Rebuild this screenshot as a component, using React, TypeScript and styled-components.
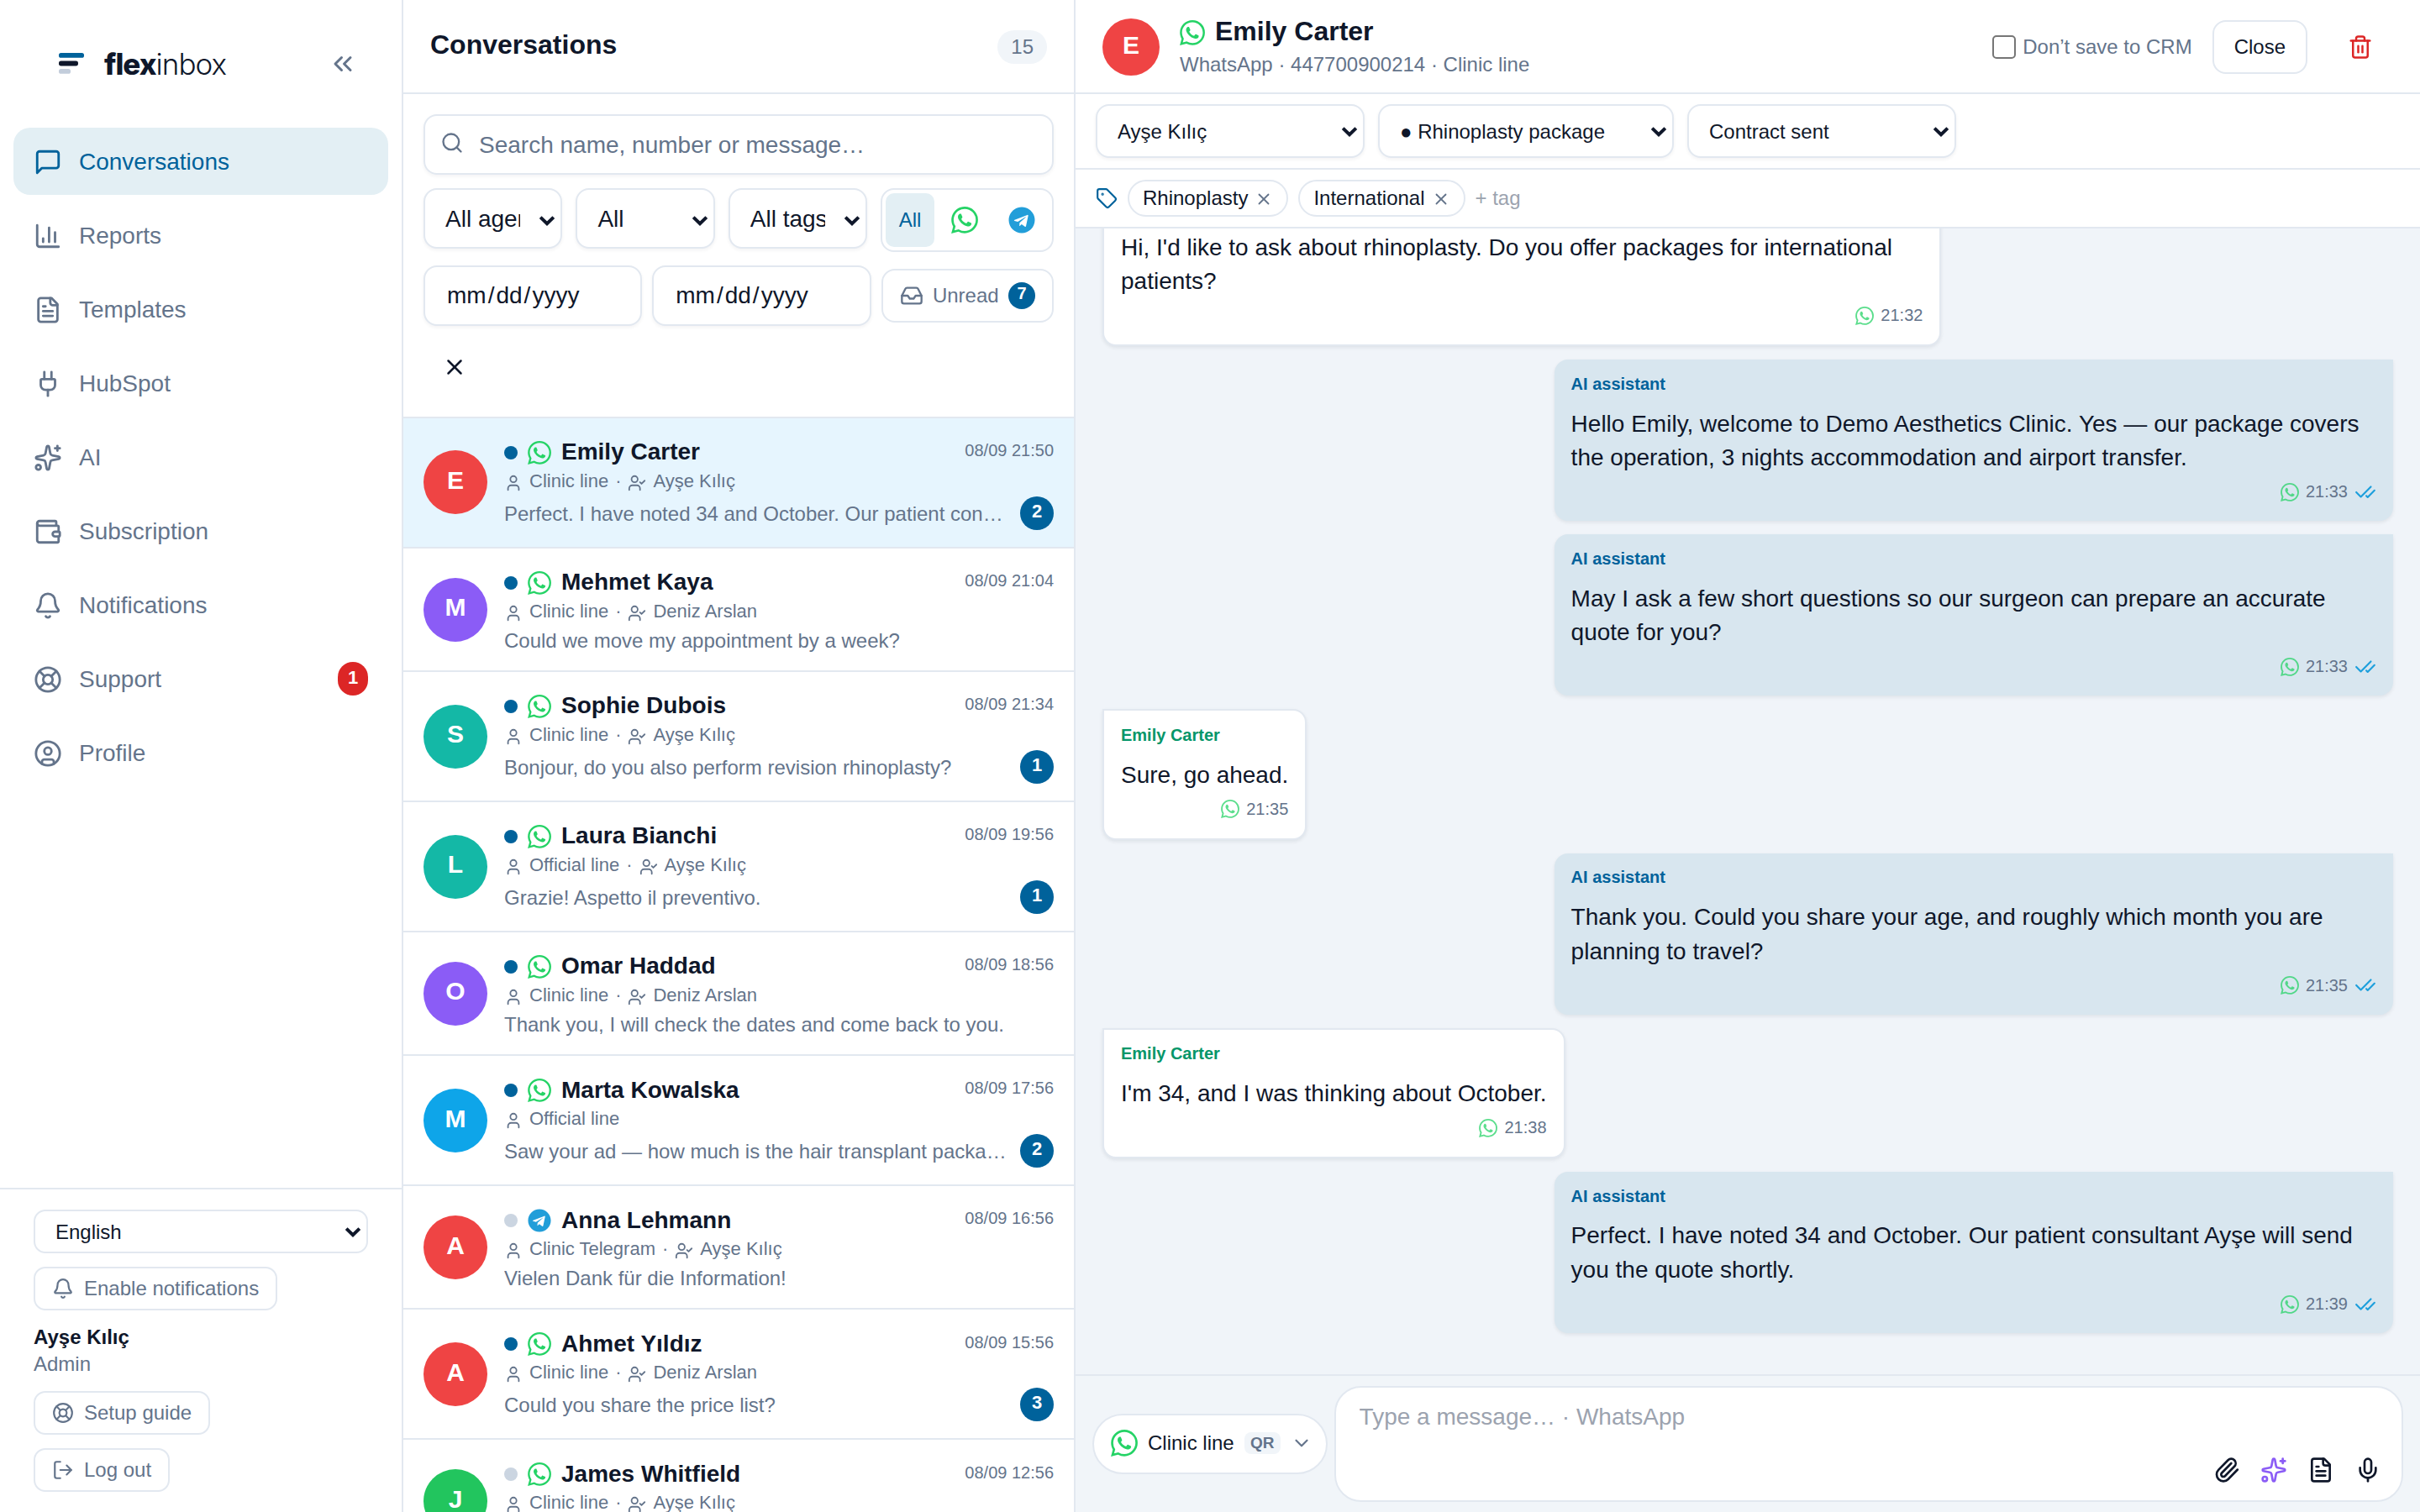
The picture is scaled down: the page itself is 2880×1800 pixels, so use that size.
import React, { FC } from "react";
import styled, { createGlobalStyle } from "styled-components";
import {
  Bell,
  ChartColumn,
  CheckCheck,
  ChevronDown,
  ChevronsLeft,
  CircleUser,
  Inbox,
  LifeBuoy,
  LogOut,
  Mic,
  Paperclip,
  Plug,
  Search,
  Sparkles,
  Tag,
  Trash2,
  User,
  UserCheck,
  Wallet,
  X,
} from "lucide-react";
import { FaTelegram } from "react-icons/fa";
import { SiWhatsapp } from "react-icons/si";

const colors = {
  primary: "#00629b",
  primarySoft: "#e3eff4",
  text: "#0f172a",
  muted: "#64748b",
  border: "#e2e8f0",
  surface: "#f1f5f9",
  danger: "#dc2626",
  whatsapp: "#25d366",
  telegram: "#229ed9",
};

type Channel = "whatsapp" | "telegram";

type Conversation = {
  name: string;
  color: string;
  channel: Channel;
  open: boolean;
  line: string;
  agent?: string;
  preview: string;
  time: string;
  unread?: number;
};

type Message = {
  out: boolean;
  sender: string;
  text: string;
  time: string;
};

const conversations: Conversation[] = [
  { name: "Emily Carter", color: "#ef4444", channel: "whatsapp", open: true, line: "Clinic line", agent: "Ayşe Kılıç", preview: "Perfect. I have noted 34 and October. Our patient consultant Ayşe will send you the quote shortly.", time: "08/09 21:50", unread: 2 },
  { name: "Mehmet Kaya", color: "#8b5cf6", channel: "whatsapp", open: true, line: "Clinic line", agent: "Deniz Arslan", preview: "Could we move my appointment by a week?", time: "08/09 21:04" },
  { name: "Sophie Dubois", color: "#14b8a6", channel: "whatsapp", open: true, line: "Clinic line", agent: "Ayşe Kılıç", preview: "Bonjour, do you also perform revision rhinoplasty?", time: "08/09 21:34", unread: 1 },
  { name: "Laura Bianchi", color: "#14b8a6", channel: "whatsapp", open: true, line: "Official line", agent: "Ayşe Kılıç", preview: "Grazie! Aspetto il preventivo.", time: "08/09 19:56", unread: 1 },
  { name: "Omar Haddad", color: "#8b5cf6", channel: "whatsapp", open: true, line: "Clinic line", agent: "Deniz Arslan", preview: "Thank you, I will check the dates and come back to you.", time: "08/09 18:56" },
  { name: "Marta Kowalska", color: "#0ea5e9", channel: "whatsapp", open: true, line: "Official line", preview: "Saw your ad — how much is the hair transplant package?", time: "08/09 17:56", unread: 2 },
  { name: "Anna Lehmann", color: "#ef4444", channel: "telegram", open: false, line: "Clinic Telegram", agent: "Ayşe Kılıç", preview: "Vielen Dank für die Information!", time: "08/09 16:56" },
  { name: "Ahmet Yıldız", color: "#ef4444", channel: "whatsapp", open: true, line: "Clinic line", agent: "Deniz Arslan", preview: "Could you share the price list?", time: "08/09 15:56", unread: 3 },
  { name: "James Whitfield", color: "#22c55e", channel: "whatsapp", open: false, line: "Clinic line", agent: "Ayşe Kılıç", preview: "", time: "08/09 12:56" },
];

const messages: Message[] = [
  { out: false, sender: "Emily Carter", text: "Hi, I'd like to ask about rhinoplasty. Do you offer packages for international patients?", time: "21:32" },
  { out: true, sender: "AI assistant", text: "Hello Emily, welcome to Demo Aesthetics Clinic. Yes — our package covers the operation, 3 nights accommodation and airport transfer.", time: "21:33" },
  { out: true, sender: "AI assistant", text: "May I ask a few short questions so our surgeon can prepare an accurate quote for you?", time: "21:33" },
  { out: false, sender: "Emily Carter", text: "Sure, go ahead.", time: "21:35" },
  { out: true, sender: "AI assistant", text: "Thank you. Could you share your age, and roughly which month you are planning to travel?", time: "21:35" },
  { out: false, sender: "Emily Carter", text: "I'm 34, and I was thinking about October.", time: "21:38" },
  { out: true, sender: "AI assistant", text: "Perfect. I have noted 34 and October. Our patient consultant Ayşe will send you the quote shortly.", time: "21:39" },
];

const LineIcon: FC<{ size: number; children: React.ReactNode }> = ({ size, children }) => (
  <svg
    width={size}
    height={size}
    viewBox="0 0 24 24"
    fill="none"
    stroke="currentColor"
    strokeWidth="2"
    strokeLinecap="round"
    strokeLinejoin="round"
  >
    {children}
  </svg>
);

const ChatIcon: FC<{ size: number }> = ({ size }) => (
  <LineIcon size={size}>
    <path d="M21 15a2 2 0 0 1-2 2H7l-4 4V5a2 2 0 0 1 2-2h14a2 2 0 0 1 2 2z" />
  </LineIcon>
);

const DocIcon: FC<{ size: number }> = ({ size }) => (
  <LineIcon size={size}>
    <path d="M15 2H6a2 2 0 0 0-2 2v16a2 2 0 0 0 2 2h12a2 2 0 0 0 2-2V7Z" />
    <path d="M14 2v4a2 2 0 0 0 2 2h4" />
    <path d="M10 9H8" />
    <path d="M16 13H8" />
    <path d="M16 17H8" />
  </LineIcon>
);

const ChannelIcon: FC<{ channel: Channel; size: number }> = ({ channel, size }) =>
  channel === "whatsapp" ? (
    <SiWhatsapp size={size} color={colors.whatsapp} />
  ) : (
    <FaTelegram size={size} color={colors.telegram} />
  );

type SelectProps = {
  options: string[];
  width?: string;
  height: number;
  fontSize: number;
};

const Select: FC<SelectProps> = ({ options, width, height, fontSize }) => (
  <SelectBox $width={width} $height={height} $fontSize={fontSize}>
    <select>
      {options.map((option) => (
        <option key={option}>{option}</option>
      ))}
    </select>
    <svg width="10" height="7" viewBox="0 0 10 7" fill="none" stroke="currentColor" strokeWidth="2">
      <path d="M1.1 1.3 5 5.1 8.9 1.3" />
    </svg>
  </SelectBox>
);

const navItems = [
  { label: "Conversations", icon: <ChatIcon size={17} />, active: true },
  { label: "Reports", icon: <ChartColumn size={17} /> },
  { label: "Templates", icon: <DocIcon size={17} /> },
  { label: "HubSpot", icon: <Plug size={17} /> },
  { label: "AI", icon: <Sparkles size={17} /> },
  { label: "Subscription", icon: <Wallet size={17} /> },
  { label: "Notifications", icon: <Bell size={17} /> },
  { label: "Support", icon: <LifeBuoy size={17} />, badge: 1 },
  { label: "Profile", icon: <CircleUser size={17} /> },
];

const Sidebar: FC = () => (
  <SidebarWrapper>
    <Brand>
      <svg width="15" height="13" viewBox="0 0 15 13">
        <rect width="15" height="2.9" rx="1.3" fill={colors.primary} />
        <rect y="4.8" width="11.5" height="2.9" rx="1.3" fill={colors.text} />
        <rect y="9.5" width="7" height="2.9" rx="1.3" fill="#c3cddb" />
      </svg>
      <BrandName>
        <b>flex</b>inbox
      </BrandName>
      <ChevronsLeft size={18} />
    </Brand>
    <Nav>
      {navItems.map((item) => (
        <NavItem key={item.label} $active={item.active}>
          {item.icon}
          <span>{item.label}</span>
          {item.badge && <NavBadge>{item.badge}</NavBadge>}
        </NavItem>
      ))}
    </Nav>
    <SidebarFooter>
      <Select options={["English", "Türkçe"]} width="100%" height={26} fontSize={12} />
      <SmallButton>
        <Bell size={13} />
        Enable notifications
      </SmallButton>
      <Account>
        <b>Ayşe Kılıç</b>
        <span>Admin</span>
      </Account>
      <SmallButton>
        <LifeBuoy size={13} />
        Setup guide
      </SmallButton>
      <SmallButton>
        <LogOut size={13} />
        Log out
      </SmallButton>
    </SidebarFooter>
  </SidebarWrapper>
);

const Filters: FC = () => (
  <FiltersWrapper>
    <SearchBox>
      <Search size={14} />
      <input placeholder="Search name, number or message…" />
    </SearchBox>
    <FilterRow $gap={8}>
      <Select options={["All agents"]} height={36} fontSize={14} />
      <Select options={["All"]} height={36} fontSize={14} />
      <Select options={["All tags"]} height={36} fontSize={14} />
      <ChannelGroup>
        <ChannelButton $active>All</ChannelButton>
        <ChannelButton>
          <ChannelIcon channel="whatsapp" size={16} />
        </ChannelButton>
        <ChannelButton>
          <ChannelIcon channel="telegram" size={16} />
        </ChannelButton>
      </ChannelGroup>
    </FilterRow>
    <FilterRow $gap={6}>
      <DateInput type="date" />
      <DateInput type="date" />
      <UnreadButton>
        <Inbox size={14} />
        Unread
        <UnreadCount>7</UnreadCount>
      </UnreadButton>
    </FilterRow>
    <ClearButton>
      <X size={15} />
    </ClearButton>
  </FiltersWrapper>
);

const ConversationRow: FC<{ item: Conversation; active: boolean }> = ({ item, active }) => (
  <Row $active={active}>
    <Avatar $size={38} $color={item.color}>
      {item.name[0]}
    </Avatar>
    <RowBody>
      <RowTop>
        <Dot $open={item.open} />
        <ChannelIcon channel={item.channel} size={14} />
        <RowName>{item.name}</RowName>
        <RowTime>{item.time}</RowTime>
      </RowTop>
      <RowMeta>
        <User size={11} />
        {item.line}
        {item.agent && (
          <>
            <span>·</span>
            <UserCheck size={11} />
            {item.agent}
          </>
        )}
      </RowMeta>
      <RowBottom>
        <Preview>{item.preview}</Preview>
        {item.unread && <Count>{item.unread}</Count>}
      </RowBottom>
    </RowBody>
  </Row>
);

const ConversationList: FC = () => (
  <ListWrapper>
    <ListHeader>
      <h1>Conversations</h1>
      <TotalPill>15</TotalPill>
    </ListHeader>
    <Filters />
    <Rows>
      {conversations.map((item, i) => (
        <ConversationRow key={item.name} item={item} active={i === 0} />
      ))}
    </Rows>
  </ListWrapper>
);

const ChatHeader: FC = () => (
  <Header>
    <Avatar $size={34} $color="#ef4444">
      E
    </Avatar>
    <HeaderInfo>
      <HeaderName>
        <ChannelIcon channel="whatsapp" size={15} />
        <b>Emily Carter</b>
      </HeaderName>
      <HeaderSub>WhatsApp · 447700900214 · Clinic line</HeaderSub>
    </HeaderInfo>
    <CrmLabel>
      <input type="checkbox" />
      Don’t save to CRM
    </CrmLabel>
    <CloseButton>Close</CloseButton>
    <DeleteButton>
      <Trash2 size={15} />
    </DeleteButton>
  </Header>
);

const Chat: FC = () => (
  <ChatWrapper>
    <ChatHeader />
    <AssignBar>
      <Select options={["Ayşe Kılıç"]} width="160px" height={32} fontSize={12} />
      <Select options={["● Rhinoplasty package"]} width="176px" height={32} fontSize={12} />
      <Select options={["Contract sent"]} width="160px" height={32} fontSize={12} />
    </AssignBar>
    <TagBar>
      <Tag size={13} />
      {["Rhinoplasty", "International"].map((tag) => (
        <TagChip key={tag}>
          {tag}
          <X size={11} />
        </TagChip>
      ))}
      <TagInput placeholder="+ tag" />
    </TagBar>
    <Messages>
      {messages.map((message, i) => (
        <Bubble key={i} $out={message.out}>
          <Sender $out={message.out}>{message.sender}</Sender>
          <p>{message.text}</p>
          <BubbleFooter>
            <SiWhatsapp size={11} color={colors.whatsapp} opacity={0.75} />
            {message.time}
            {message.out && <CheckCheck size={13} color="#1d9fdc" />}
          </BubbleFooter>
        </Bubble>
      ))}
    </Messages>
    <Composer>
      <LinePicker>
        <ChannelIcon channel="whatsapp" size={16} />
        Clinic line
        <QrBadge>QR</QrBadge>
        <ChevronDown size={13} color={colors.muted} />
      </LinePicker>
      <ComposerBox>
        <textarea placeholder="Type a message… · WhatsApp" />
        <ComposerTools>
          <ToolButton>
            <Paperclip size={16} />
          </ToolButton>
          <ToolButton $color="#8b5cf6">
            <Sparkles size={16} />
          </ToolButton>
          <ToolButton>
            <DocIcon size={16} />
          </ToolButton>
          <ToolButton>
            <Mic size={16} />
          </ToolButton>
        </ComposerTools>
      </ComposerBox>
    </Composer>
  </ChatWrapper>
);

const App: FC = () => (
  <>
    <GlobalStyle />
    <Shell>
      <Sidebar />
      <ConversationList />
      <Chat />
    </Shell>
  </>
);

// The layout is authored at 1440x900 and scaled for a retina sized window
const GlobalStyle = createGlobalStyle`
  * {
    box-sizing: border-box;
  }

  body {
    margin: 0;
    overflow: hidden;
  }

  #root {
    zoom: 2;
    font-family: "Liberation Sans", Arial, sans-serif;
    font-size: 14px;
    line-height: 1.45;
    color: ${colors.text};
  }

  button,
  input,
  select,
  textarea {
    font-family: inherit;
    color: inherit;
    margin: 0;
  }

  h1,
  p {
    margin: 0;
  }

  svg {
    flex-shrink: 0;
    display: block;
  }
`;

const Shell = styled.div`
  display: grid;
  grid-template-columns: 240px 400px 800px;
  width: 1440px;
  height: 900px;
  overflow: hidden;
  background: #fff;
`;

const SelectBox = styled.div<{ $width?: string; $height: number; $fontSize: number }>`
  position: relative;
  flex: ${({ $width }) => ($width ? "none" : "1")};
  width: ${({ $width }) => $width ?? "auto"};
  min-width: 0;

  select {
    display: block;
    appearance: none;
    width: 100%;
    height: ${({ $height }) => $height}px;
    padding: 0 24px 0 12px;
    border: 1px solid ${colors.border};
    border-radius: ${({ $height }) => ($height > 30 ? 8 : 7)}px;
    background: #fff;
    box-shadow: ${({ $height }) => ($height > 30 ? "0 1px 2px rgba(15, 23, 42, 0.05)" : "none")};
    font-size: ${({ $fontSize }) => $fontSize}px;
  }

  svg {
    position: absolute;
    top: calc(50% - 3px);
    right: 4px;
    pointer-events: none;
  }
`;

const SidebarWrapper = styled.aside`
  display: flex;
  flex-direction: column;
  border-right: 1px solid ${colors.border};
  background: #fff;
`;

const Brand = styled.div`
  display: flex;
  align-items: center;
  height: 76px;
  padding: 0 26px 0 35px;
  color: ${colors.muted};
`;

const BrandName = styled.span`
  flex: 1;
  margin-left: 12px;
  font-family: Inter, sans-serif;
  font-size: 17.5px;
  font-weight: 300;
  line-height: 24px;
  letter-spacing: -0.48px;
  color: ${colors.text};

  b {
    font-weight: 800;
  }
`;

const Nav = styled.nav`
  display: flex;
  flex-direction: column;
  gap: 4px;
  flex: 1;
  padding: 0 8px;
`;

const NavItem = styled.a<{ $active?: boolean }>`
  display: flex;
  align-items: center;
  gap: 10px;
  height: 40px;
  padding: 1px 12px 0;
  border-radius: 10px;
  color: ${({ $active }) => ($active ? colors.primary : colors.muted)};
  background: ${({ $active }) => ($active ? colors.primarySoft : "transparent")};
`;

const NavBadge = styled.span`
  min-width: 18px;
  height: 20px;
  margin-top: -1px;
  margin-left: auto;
  border-radius: 10px;
  background: ${colors.danger};
  color: #fff;
  font-size: 11px;
  font-weight: 700;
  line-height: 19px;
  text-align: center;
`;

const SidebarFooter = styled.div`
  display: flex;
  flex-direction: column;
  align-items: flex-start;
  gap: 8px;
  padding: 12px 20px;
  border-top: 1px solid ${colors.border};
`;

const SmallButton = styled.button`
  display: flex;
  align-items: center;
  gap: 6px;
  height: 26px;
  padding: 0 10px;
  border: 1px solid ${colors.border};
  border-radius: 7px;
  background: #fff;
  color: ${colors.muted};
  font-size: 12px;
`;

const Account = styled.div`
  display: flex;
  flex-direction: column;
  font-size: 12px;
  line-height: 16px;

  span {
    color: ${colors.muted};
  }
`;

const ListWrapper = styled.section`
  display: flex;
  flex-direction: column;
  min-width: 0;
  height: 900px;
  overflow: hidden;
  border-right: 1px solid ${colors.border};
`;

const ListHeader = styled.header`
  display: flex;
  align-items: center;
  justify-content: space-between;
  flex-shrink: 0;
  height: 56px;
  padding: 1px 16px 0;
  border-bottom: 1px solid ${colors.border};

  h1 {
    padding-bottom: 3px;
    font-size: 16px;
    font-weight: 700;
  }
`;

const TotalPill = styled.span`
  height: 20px;
  padding: 0 8px;
  border-radius: 10px;
  background: ${colors.surface};
  color: ${colors.muted};
  font-size: 12px;
  line-height: 20px;
`;

const FiltersWrapper = styled.div`
  display: flex;
  flex-direction: column;
  flex-shrink: 0;
  gap: 8px;
  padding: 12px;
  border-bottom: 1px solid ${colors.border};
`;

const SearchBox = styled.label`
  display: flex;
  align-items: center;
  gap: 9px;
  height: 36px;
  padding: 0 9px;
  border: 1px solid ${colors.border};
  border-radius: 8px;
  box-shadow: 0 1px 2px rgba(15, 23, 42, 0.05);
  color: ${colors.muted};

  svg {
    margin-bottom: 2px;
  }

  input {
    flex: 1;
    padding: 1px 0 0;
    border: 0;
    outline: 0;
    background: transparent;
    font-size: 14px;
  }

  input::placeholder {
    color: ${colors.muted};
  }
`;

const FilterRow = styled.div<{ $gap: number }>`
  display: flex;
  gap: ${({ $gap }) => $gap}px;
`;

const ChannelGroup = styled.div`
  display: flex;
  gap: 2px;
  height: 38px;
  padding: 2px;
  border: 1px solid ${colors.border};
  border-radius: 8px;
`;

const ChannelButton = styled.button<{ $active?: boolean }>`
  display: flex;
  align-items: center;
  justify-content: center;
  height: 32px;
  padding: 0 ${({ $active }) => ($active ? 7.8 : 8)}px;
  border: 0;
  border-radius: 5px;
  background: ${({ $active }) => ($active ? colors.primarySoft : "transparent")};
  color: ${colors.primary};
  font-size: 12px;
`;

// The picker icon sits past the text and is cut by the right border
const DateInput = styled.input`
  flex: 1;
  min-width: 0;
  height: 36px;
  padding: 0 0 0 12px;
  border: 1px solid ${colors.border};
  border-radius: 8px;
  box-shadow: 0 1px 2px rgba(15, 23, 42, 0.05);
  font-size: 14px;
  overflow: hidden;

  &::-webkit-datetime-edit {
    flex: none;
  }

  &::-webkit-calendar-picker-indicator {
    flex: none;
    margin-inline-start: 26px;
  }
`;

const UnreadButton = styled.button`
  display: flex;
  align-items: center;
  align-self: center;
  gap: 5.7px;
  height: 32px;
  padding: 0 10px;
  border: 1px solid ${colors.border};
  border-radius: 8px;
  background: #fff;
  color: ${colors.muted};
  font-size: 12px;
`;

const UnreadCount = styled.span`
  width: 16px;
  height: 16px;
  border-radius: 50%;
  background: ${colors.primary};
  color: #fff;
  font-size: 10px;
  font-weight: 700;
  line-height: 13.5px;
  text-align: center;
`;

const ClearButton = styled.button`
  display: flex;
  align-items: center;
  justify-content: center;
  width: 37px;
  height: 36px;
  margin-top: -2px;
  padding: 1px 0 0;
  border: 0;
  background: transparent;
`;

const Rows = styled.div`
  flex: 1;
  min-height: 0;
  overflow: hidden;
`;

const Row = styled.div<{ $active: boolean }>`
  display: flex;
  align-items: center;
  gap: 10px;
  padding: 10px 12px;
  border-bottom: 1px solid ${colors.border};
  background: ${({ $active }) => ($active ? "#e6f5fe" : "#fff")};
`;

const Avatar = styled.div<{ $size: number; $color: string }>`
  display: flex;
  align-items: center;
  justify-content: center;
  flex-shrink: 0;
  width: ${({ $size }) => $size}px;
  height: ${({ $size }) => $size}px;
  padding-bottom: 2.5px;
  border-radius: 50%;
  background: ${({ $color }) => $color};
  color: #fff;
  font-size: 15px;
  font-weight: 700;
`;

const RowBody = styled.div`
  flex: 1;
  min-width: 0;
`;

const RowTop = styled.div`
  display: flex;
  align-items: center;
  gap: 6px;
  height: 19.6px;
  padding-top: 1px;
`;

const Dot = styled.span<{ $open: boolean }>`
  width: 8px;
  height: 8px;
  border-radius: 50%;
  background: ${({ $open }) => ($open ? colors.primary : "#cbd5e1")};
`;

const RowName = styled.span`
  flex: 1;
  font-weight: 700;
`;

const RowTime = styled.span`
  padding-bottom: 2px;
  color: ${colors.muted};
  font-size: 10px;
`;

const RowMeta = styled.div`
  display: flex;
  align-items: center;
  gap: 4px;
  height: 15.4px;
  color: ${colors.muted};
  font-size: 11px;

  svg {
    margin-top: 2px;
  }
`;

const RowBottom = styled.div`
  display: flex;
  align-items: center;
  gap: 8px;
  margin-top: 1.5px;
`;

const Preview = styled.span`
  flex: 1;
  min-width: 0;
  height: 16.1px;
  overflow: hidden;
  color: ${colors.muted};
  font-size: 12px;
  line-height: 16.8px;
  text-overflow: ellipsis;
  white-space: nowrap;
`;

const Count = styled.span`
  width: 20px;
  height: 20px;
  border-radius: 50%;
  background: ${colors.primary};
  color: #fff;
  font-size: 11px;
  font-weight: 700;
  line-height: 17.5px;
  text-align: center;
`;

const ChatWrapper = styled.main`
  display: flex;
  flex-direction: column;
  height: 900px;
  min-width: 0;
`;

const Header = styled.header`
  display: flex;
  align-items: center;
  gap: 12px;
  flex-shrink: 0;
  height: 56px;
  padding: 1px 16px 0;
  border-bottom: 1px solid ${colors.border};
`;

const HeaderInfo = styled.div`
  flex: 1;
  padding-bottom: 1px;
`;

const HeaderName = styled.div`
  display: flex;
  align-items: center;
  gap: 6px;
  height: 21px;
  font-size: 16px;

  b {
    padding-bottom: 1px;
  }
`;

const HeaderSub = styled.div`
  color: ${colors.muted};
  font-size: 12px;
  line-height: 16.5px;
`;

const CrmLabel = styled.label`
  display: flex;
  align-items: center;
  gap: 4px;
  color: ${colors.muted};
  font-size: 12px;

  input {
    width: 14px;
    height: 14px;
  }
`;

const CloseButton = styled.button`
  height: 32px;
  padding: 0 12px;
  border: 1px solid ${colors.border};
  border-radius: 8px;
  background: #fff;
  font-size: 12px;
`;

const DeleteButton = styled.button`
  display: flex;
  padding: 8px 12px;
  border: 0;
  background: transparent;
  color: ${colors.danger};
`;

const AssignBar = styled.div`
  display: flex;
  gap: 8px;
  flex-shrink: 0;
  padding: 6px 12px;
  border-bottom: 1px solid ${colors.border};
`;

const TagBar = styled.div`
  display: flex;
  align-items: center;
  gap: 6px;
  flex-shrink: 0;
  padding: 6px 12px;
  border-bottom: 1px solid ${colors.border};
  color: ${colors.primary};
`;

const TagChip = styled.span`
  display: flex;
  align-items: center;
  gap: 4px;
  height: 22px;
  padding: 0 8px;
  border: 1px solid ${colors.border};
  border-radius: 11px;
  color: ${colors.text};
  font-size: 12px;

  svg {
    margin-top: 1px;
    color: ${colors.muted};
  }
`;

const TagInput = styled.input`
  width: 70px;
  padding: 0;
  border: 0;
  outline: 0;
  font-size: 12px;

  &::placeholder {
    color: #9ca3af;
  }
`;

const Messages = styled.div`
  display: flex;
  flex-direction: column;
  justify-content: flex-end;
  gap: 8px;
  flex: 1;
  min-height: 0;
  padding: 16px 16px 24.5px;
  overflow: hidden;
  background: #f0f4f9;
`;

const Bubble = styled.div<{ $out: boolean }>`
  align-self: ${({ $out }) => ($out ? "flex-end" : "flex-start")};
  flex-shrink: 0;
  max-width: 65%;
  padding: 8.4px 10px 10px;
  border: ${({ $out }) => ($out ? "0" : `1px solid ${colors.border}`)};
  border-radius: ${({ $out }) => ($out ? "8px 0 8px 8px" : "0 8px 8px 8px")};
  background: ${({ $out }) => ($out ? "#d8e6ef" : "#fff")};
  box-shadow: 0 1px 2px rgba(15, 23, 42, 0.08);

  p {
    line-height: 20.3px;
  }
`;

const Sender = styled.div<{ $out: boolean }>`
  margin-bottom: 7.2px;
  color: ${({ $out }) => ($out ? colors.primary : "#059669")};
  font-size: 10px;
  font-weight: 700;
  line-height: 12.6px;
`;

const BubbleFooter = styled.div`
  display: flex;
  align-items: center;
  justify-content: flex-end;
  gap: 4px;
  margin-top: 2.7px;
  color: ${colors.muted};
  font-size: 10px;
  line-height: 14.5px;
`;

const Composer = styled.div`
  display: flex;
  align-items: center;
  gap: 4px;
  flex-shrink: 0;
  padding: 6px 10px;
  border-top: 1px solid ${colors.border};
  background: ${colors.surface};
`;

const LinePicker = styled.button`
  display: flex;
  align-items: center;
  gap: 6px;
  flex-shrink: 0;
  height: 36px;
  padding: 0 8px 1px 10px;
  border: 1px solid ${colors.border};
  border-radius: 18px;
  background: #fff;
  font-size: 12px;
`;

const QrBadge = styled.span`
  height: 13px;
  padding: 0 3.6px;
  border-radius: 4px;
  background: ${colors.surface};
  color: ${colors.muted};
  font-size: 9.5px;
  font-weight: 700;
  line-height: 13px;
`;

const ComposerBox = styled.div`
  display: flex;
  flex-direction: column;
  flex: 1;
  height: 69px;
  padding: 7.5px 6px 4px 14px;
  border: 1px solid ${colors.border};
  border-radius: 16px;
  background: #fff;

  textarea {
    flex: 1;
    min-height: 0;
    padding: 0;
    border: 0;
    outline: 0;
    resize: none;
    background: transparent;
    font-size: 14px;
    line-height: 20px;
  }

  textarea::placeholder {
    color: #9ca3af;
  }
`;

const ComposerTools = styled.div`
  display: flex;
  justify-content: flex-end;
`;

const ToolButton = styled.button<{ $color?: string }>`
  display: flex;
  align-items: center;
  justify-content: center;
  width: 28px;
  height: 28px;
  padding: 0;
  border: 0;
  background: transparent;
  color: ${({ $color }) => $color ?? colors.text};
`;

export default App;
